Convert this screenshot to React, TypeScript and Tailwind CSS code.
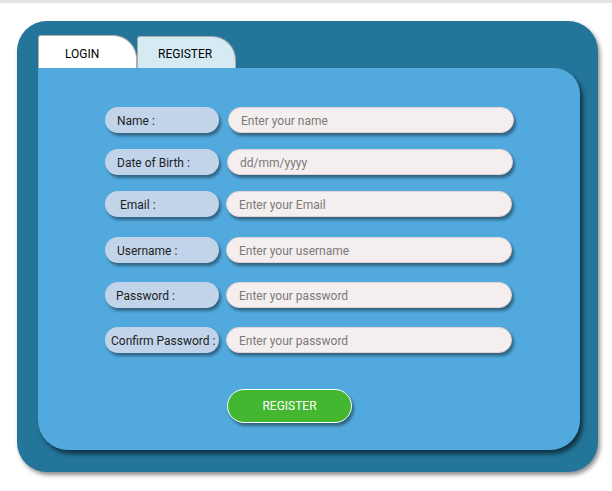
const rows = [
  { label: 'Name :', placeholder: 'Enter your name', top: 'mt-[39px]', lx: 'pl-3', ix: 'ml-[9px]' },
  { label: 'Date of Birth :', placeholder: 'dd/mm/yyyy', top: 'mt-4', lx: 'pl-3', ix: 'ml-2' },
  { label: 'Email :', placeholder: 'Enter your Email', top: 'mt-4', lx: 'pl-[15px]', ix: 'ml-[7px]' },
  { label: 'Username :', placeholder: 'Enter your username', top: 'mt-5', lx: 'pl-3', ix: 'ml-[7px]' },
  { label: 'Password :', placeholder: 'Enter your password', top: 'mt-[19px]', lx: 'pl-[11px]', ix: 'ml-[7px]' },
  { label: 'Confirm Password :', placeholder: 'Enter your password', top: 'mt-[19px]', lx: 'pl-[6px]', ix: 'ml-[7px]' },
]

export default function App() {
  return (
    <div className="min-h-[491px] bg-white font-['Roboto',sans-serif]">
      <div className="h-[3px] bg-[#e4e4e4]" />
      <div className="ml-[17px] mt-[18px] w-[581px] h-[451px] rounded-[30px] bg-[#237599] pl-[21px] pt-[14px] shadow-[2px_3px_4px_rgba(0,0,0,0.45)]">
        {/* Tabs */}
        <div className="flex items-end h-[33px]">
          <div className="w-[99px] h-[33px] bg-white border border-[#b0b0b0] border-b-0 rounded-tl-[3px] rounded-tr-[24px] flex items-center pl-[26px] pt-[3px] text-[12px] text-black">
            LOGIN
          </div>
          <div className="w-[99px] h-[32px] bg-[#d5eaf3] border border-[#a9a9a9] border-b-0 rounded-tl-[3px] rounded-tr-[24px] flex items-center pl-5 pt-[2px] text-[12px] text-black">
            REGISTER
          </div>
        </div>

        {/* Panel */}
        <div className="w-[542px] h-[382px] bg-[#51a9dd] rounded-tr-[26px] rounded-b-[30px] shadow-[3px_4px_4px_rgba(0,0,0,0.55)] pl-[67px] flex flex-col">
          {rows.map(r => (
            <div key={r.label} className={`flex items-center ${r.top}`}>
              <div className={`w-[114px] h-[26px] rounded-full bg-[#c2d4ea] ${r.lx} pt-[2px] flex items-center text-[12px] text-[#1e1e1e] shadow-[2px_3px_3px_rgba(0,0,0,0.4)] whitespace-nowrap`}>
                {r.label}
              </div>
              <input
                readOnly
                placeholder={r.placeholder}
                className={`${r.ix} w-[286px] h-[26px] rounded-full bg-[#f4eeef] border border-[#e2d2d4] pl-3 pt-[2px] text-[12px] placeholder:text-[#7a7a7a] outline-none shadow-[2px_3px_3px_rgba(0,0,0,0.4)]`}
              />
            </div>
          ))}

          <button className="mt-9 ml-[122px] w-[125px] h-[34px] rounded-full bg-[#43b72f] border border-white text-white text-[12px] shadow-[2px_3px_3px_rgba(0,0,0,0.4)]">
            REGISTER
          </button>
        </div>
      </div>
    </div>
  )
}
